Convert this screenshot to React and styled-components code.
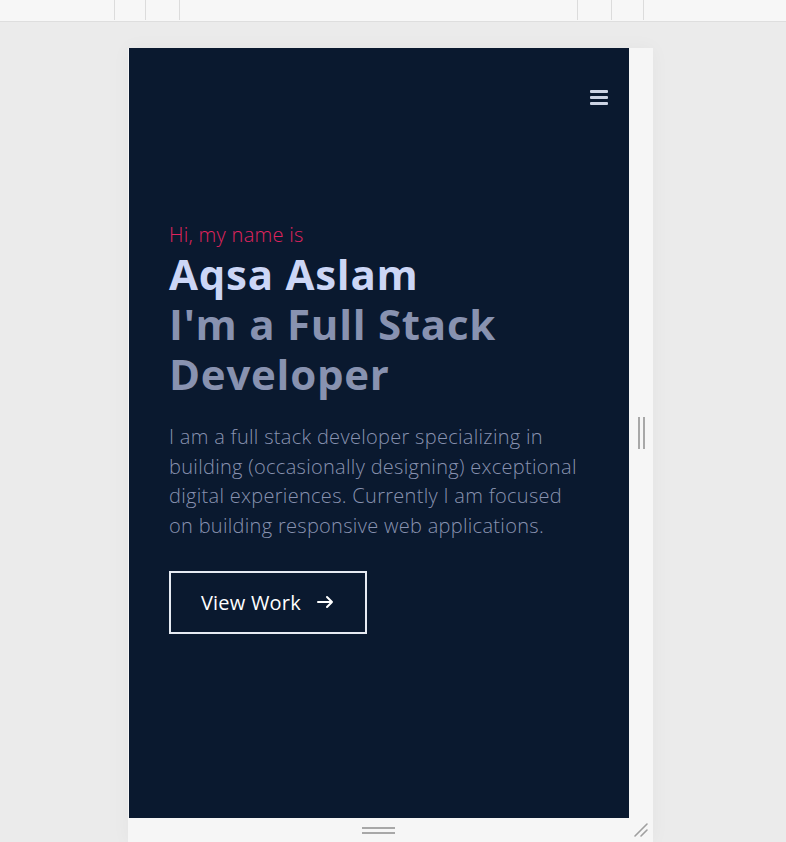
import React from 'react'
import styled, { createGlobalStyle } from 'styled-components'

const Global = createGlobalStyle`
  html, body {
    margin: 0;
    padding: 0;
    background: #ebebeb;
    font-family: "Open Sans", Lato, sans-serif;
  }
`

function App() {
    return (
        <>
            <Global />
            <Toolbar>
                <Divider $at={114} />
                <Divider $at={145} />
                <Divider $at={179} />
                <Spacer />
                <Divider $at={577} />
                <Divider $at={611} />
                <Divider $at={643} />
            </Toolbar>
            <Stage>
                <Device>
                    <Viewport>
                        <Nav>
                            <Burger aria-label="menu">
                                <span /><span /><span />
                            </Burger>
                        </Nav>
                        <Hero>
                            <Greeting>Hi, my name is</Greeting>
                            <Title>
                                Aqsa Aslam
                                <Role>I'm a Full Stack Developer</Role>
                            </Title>
                            <Intro>
                                I am a full stack developer specializing in building (occasionally designing)
                                exceptional digital experiences. Currently I am focused on building responsive
                                web applications.
                            </Intro>
                            <WorkButton>
                                View Work
                                <svg width="17" height="14" viewBox="0 0 17 14" fill="none" stroke="#fff" strokeWidth="2" strokeLinecap="round" strokeLinejoin="round">
                                    <path d="M1 7h14M10 2l5 5-5 5" />
                                </svg>
                            </WorkButton>
                        </Hero>
                    </Viewport>
                    <SideHandle>
                        <i /><i />
                    </SideHandle>
                    <BottomHandle>
                        <i /><i />
                    </BottomHandle>
                    <Corner>
                        <svg width="16" height="16" viewBox="0 0 16 16" stroke="#a0a0a0" strokeWidth="1.6" strokeLinecap="round">
                            <path d="M2 14L14 2M8 14l6-6" />
                        </svg>
                    </Corner>
                </Device>
            </Stage>
        </>
    )
}

export default App

const Toolbar = styled.div`
display: flex;
height: 22px;
background: #f7f7f7;
border-bottom: 1px solid #dedede;
box-sizing: border-box;
position: relative;
`

const Spacer = styled.div`
flex: 1;
`

const Divider = styled.div`
position: absolute;
left: ${p => p.$at}px;
top: 0;
width: 1px;
height: 20px;
background: #dcdcdc;
`

const Stage = styled.div`
padding: 26px 0 0 128px;
height: 820px;
box-sizing: border-box;
overflow: hidden;
`

const Device = styled.div`
display: grid;
grid-template-columns: 501px 24px;
grid-template-rows: 770px 24px;
width: 525px;
background: #f6f6f6;
box-shadow: 0 0 18px rgba(0, 0, 0, 0.04);
`

const Viewport = styled.div`
background: #0a192f;
margin-left: 1px;
display: flex;
flex-direction: column;
overflow: hidden;
`

const Nav = styled.nav`
display: flex;
justify-content: flex-end;
padding: 42px 21px 0 0;
`

const Burger = styled.button`
display: flex;
flex-direction: column;
gap: 3px;
width: 18px;
padding: 0;
border: 0;
background: none;

span {
    height: 3px;
    border-radius: 1px;
    background: #ccd3e3;
}
`

const Hero = styled.section`
display: flex;
flex-direction: column;
align-items: flex-start;
padding: 117px 40px 0 40px;
`

const Greeting = styled.p`
margin: 0 0 1px;
color: #e0245e;
font-size: 20px;
line-height: 26px;
font-weight: 300;
letter-spacing: 0.3px;
`

const Title = styled.h1`
margin: 0;
color: #ccd6f6;
font-size: 42px;
line-height: 50px;
font-weight: 700;
letter-spacing: 0.75px;
`

const Role = styled.span`
display: block;
color: #8892b0;
`

const Intro = styled.p`
margin: 23px 0 0;
color: #8892b0;
font-size: 20px;
line-height: 29.7px;
font-weight: 300;
letter-spacing: 0.3px;
max-width: 420px;
`

const WorkButton = styled.button`
display: flex;
align-items: center;
gap: 16px;
margin-top: 30px;
height: 63px;
padding: 0 31px 0 30px;
border: 2px solid #e6eaf2;
background: transparent;
color: #fff;
font-family: inherit;
font-size: 20px;
font-weight: 400;
letter-spacing: 0.2px;
`

const SideHandle = styled.div`
display: flex;
justify-content: center;
align-items: center;
gap: 3px;

i {
    width: 2px;
    height: 32px;
    background: #a8a8a8;
}
`

const BottomHandle = styled.div`
display: flex;
flex-direction: column;
align-items: center;
justify-content: center;
gap: 3px;

i {
    width: 33px;
    height: 2px;
    background: #a8a8a8;
}
`

const Corner = styled.div`
display: flex;
align-items: center;
justify-content: center;
`
